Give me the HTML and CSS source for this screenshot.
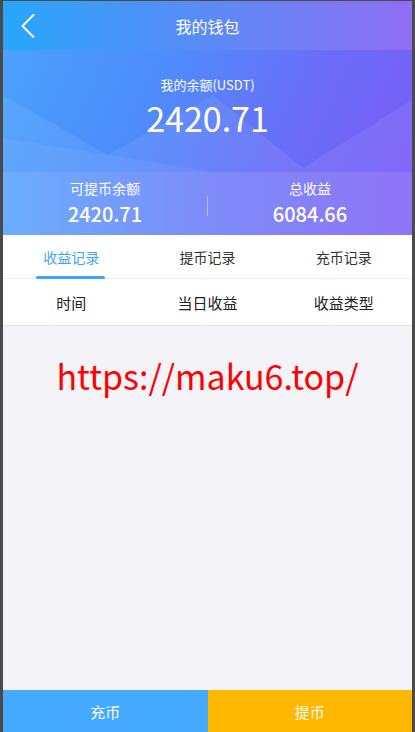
FILE: index.html
```html
<!DOCTYPE html>
<html lang="zh-CN">
<head>
    <meta charset="UTF-8">
    <meta name="viewport" content="width=device-width, initial-scale=1.0">
    <title>我的钱包</title>
    <link rel="stylesheet" href="styles.css">
</head>
<body>
    <div class="app">
        <header class="top-bar">
            <a class="back" href="#">
                <svg width="14" height="24" viewBox="0 0 14 24">
                    <polyline points="12.5,1 1.5,12 12.5,23" fill="none" stroke="#fff" stroke-width="1.8" stroke-linecap="round" stroke-linejoin="round"/>
                </svg>
            </a>
            <h1>我的钱包</h1>
        </header>

        <section class="hero">
            <svg class="hero-bg" viewBox="0 0 409 122" preserveAspectRatio="none">
                <polygon points="0,45 105,105 210,45 300,118 409,50 409,122 0,122" fill="rgba(255,255,255,0.07)"/>
                <polygon points="0,88 105,105 210,122 0,122" fill="rgba(255,255,255,0.05)"/>
            </svg>
            <div class="hero-label">我的余额(USDT)</div>
            <div class="hero-amount">2420.71</div>
        </section>

        <section class="stats">
            <div class="stat">
                <div class="stat-label">可提币余额</div>
                <div class="stat-value">2420.71</div>
            </div>
            <div class="stat-divider"></div>
            <div class="stat">
                <div class="stat-label">总收益</div>
                <div class="stat-value">6084.66</div>
            </div>
        </section>

        <nav class="tabs">
            <a class="tab active" href="#">收益记录</a>
            <a class="tab" href="#">提币记录</a>
            <a class="tab" href="#">充币记录</a>
        </nav>

        <div class="table-head">
            <span>时间</span>
            <span>当日收益</span>
            <span>收益类型</span>
        </div>

        <main class="list">
            <p class="notice">https://maku6.top/</p>
        </main>

        <footer class="actions">
            <button class="btn-deposit">充币</button>
            <button class="btn-withdraw">提币</button>
        </footer>
    </div>
</body>
</html>
```

FILE: styles.css
```css
* {
    box-sizing: border-box;
}

body {
    margin: 0;
    height: 100vh;
    background: #4a4a4a;
    font-family: "Noto Sans CJK SC", "Noto Sans", sans-serif;
    overflow: hidden;
}

.app {
    margin: 1px 3px 0;
    height: calc(100vh - 1px);
    display: flex;
    flex-direction: column;
    background: #f4f4f8;
}

.top-bar {
    position: relative;
    height: 49px;
    display: flex;
    align-items: center;
    justify-content: center;
    background: linear-gradient(90deg, #28a6fb, #8f6ef2);
    color: #fff;
}

.back {
    position: absolute;
    left: 18px;
    top: 13px;
    display: flex;
}

.top-bar h1 {
    margin: 0;
    font-size: 16px;
    font-weight: normal;
}

.hero {
    position: relative;
    height: 122px;
    padding-top: 25px;
    text-align: center;
    color: #fff;
    background: linear-gradient(115deg, #4aa2fd 0%, #4d8dfb 35%, #6a6ef8 70%, #7a5cf6 100%);
    overflow: hidden;
}

.hero-bg {
    position: absolute;
    left: 0;
    top: 0;
    width: 100%;
    height: 100%;
}

.hero-label,
.hero-amount {
    position: relative;
}

.hero-label {
    font-size: 13px;
    line-height: 20px;
}

.hero-amount {
    font-size: 34px;
    line-height: 50px;
    margin-top: -2px;
}

.stats {
    height: 63px;
    display: flex;
    align-items: center;
    padding-bottom: 2px;
    color: #fff;
    background: linear-gradient(90deg, #6aaefd, #7d8cf9 50%, #8f74f7);
}

.stat {
    flex: 1;
    text-align: center;
}

.stat-label {
    font-size: 14px;
    line-height: 21px;
}

.stat-value {
    font-size: 20px;
    line-height: 29px;
    font-weight: 500;
}

.stat-divider {
    width: 1px;
    height: 20px;
    margin-top: 6px;
    background: rgba(255, 255, 255, 0.4);
}

.tabs {
    height: 44px;
    display: flex;
    background: #fff;
    border-bottom: 1px solid #eeeef2;
}

.tab {
    flex: 1;
    display: flex;
    align-items: center;
    justify-content: center;
    position: relative;
    font-size: 14px;
    color: #333;
    text-decoration: none;
}

.tab.active {
    color: #3ea4f5;
}

.tab.active::after {
    content: "";
    position: absolute;
    bottom: -1px;
    left: 50%;
    width: 69px;
    height: 3px;
    margin-left: -35px;
    background: #3ea4f5;
    border-radius: 2px;
}

.table-head {
    height: 47px;
    display: flex;
    align-items: center;
    background: #fff;
    border-bottom: 1px solid #e3e3e8;
}

.table-head span {
    flex: 1;
    text-align: center;
    font-size: 15px;
    color: #222;
}

.list {
    flex: 1;
}

.notice {
    margin: 25px 0 0;
    text-align: center;
    font-size: 34px;
    line-height: 50px;
    color: #ff0000;
}

.actions {
    display: flex;
    height: 42px;
}

.actions button {
    flex: 1;
    border: none;
    color: #fff;
    font-family: inherit;
    font-size: 15px;
}

.btn-deposit {
    background: #45a9ff;
}

.btn-withdraw {
    background: #ffb800;
}
```
